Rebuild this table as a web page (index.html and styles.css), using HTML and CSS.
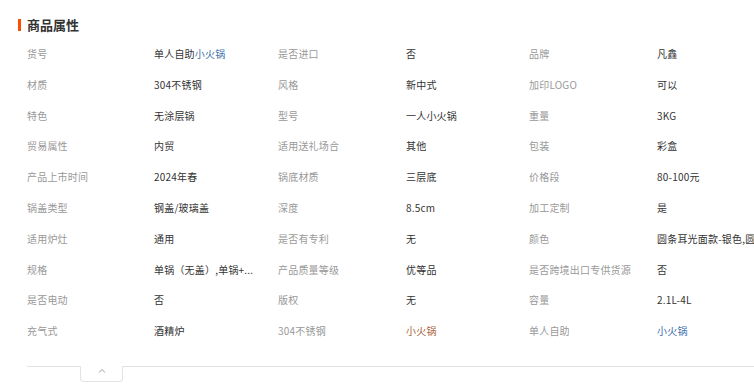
FILE: index.html
```html
<!DOCTYPE html>
<html lang="zh">
<head>
<meta charset="utf-8">
<link rel="stylesheet" href="styles.css">
</head>
<body>
<div class="panel">
  <div class="title"><span class="bar"></span><span class="title-text">商品属性</span></div>
  <div class="grid">
    <div class="k">货号</div><div class="v"><span>单人自助</span><span class="blue">小火锅</span></div>
    <div class="k">是否进口</div><div class="v">否</div>
    <div class="k">品牌</div><div class="v">凡鑫</div>

    <div class="k">材质</div><div class="v">304不锈钢</div>
    <div class="k">风格</div><div class="v">新中式</div>
    <div class="k">加印LOGO</div><div class="v">可以</div>

    <div class="k">特色</div><div class="v">无涂层锅</div>
    <div class="k">型号</div><div class="v">一人小火锅</div>
    <div class="k">重量</div><div class="v">3KG</div>

    <div class="k">贸易属性</div><div class="v">内贸</div>
    <div class="k">适用送礼场合</div><div class="v">其他</div>
    <div class="k">包装</div><div class="v">彩盒</div>

    <div class="k">产品上市时间</div><div class="v">2024年春</div>
    <div class="k">锅底材质</div><div class="v">三层底</div>
    <div class="k">价格段</div><div class="v">80-100元</div>

    <div class="k">锅盖类型</div><div class="v">钢盖/玻璃盖</div>
    <div class="k">深度</div><div class="v">8.5cm</div>
    <div class="k">加工定制</div><div class="v">是</div>

    <div class="k">适用炉灶</div><div class="v">通用</div>
    <div class="k">是否有专利</div><div class="v">无</div>
    <div class="k">颜色</div><div class="v">圆条耳光面款-银色,圆条耳光面款-金色</div>

    <div class="k">规格</div><div class="v clip">单锅（无盖）,单锅+...</div>
    <div class="k">产品质量等级</div><div class="v">优等品</div>
    <div class="k">是否跨境出口专供货源</div><div class="v">否</div>

    <div class="k">是否电动</div><div class="v">否</div>
    <div class="k">版权</div><div class="v">无</div>
    <div class="k">容量</div><div class="v">2.1L-4L</div>

    <div class="k">充气式</div><div class="v">酒精炉</div>
    <div class="k">304不锈钢</div><div class="v orange">小火锅</div>
    <div class="k">单人自助</div><div class="v blue">小火锅</div>
  </div>
  <div class="foot">
    <div class="line-left"></div>
    <div class="tab">
      <svg width="8" height="5" viewBox="0 0 8 5"><polyline points="1,4.5 4,1.5 7,4.5" fill="none" stroke="#999" stroke-width="1"/></svg>
    </div>
    <div class="line-right"></div>
  </div>
</div>
</body>
</html>
```

FILE: styles.css
```css
html, body {
  margin: 0;
  padding: 0;
  background: #fff;
  overflow: hidden;
}
body {
  font-family: "Noto Sans CJK SC", "Noto Sans", sans-serif;
  width: 754px;
  height: 390px;
}
.panel {
  padding-top: 17px;
  width: 900px;
}
.title {
  display: flex;
  align-items: center;
  padding-left: 18px;
  height: 16px;
}
.bar {
  width: 3px;
  height: 12px;
  background: #ff4d00;
  margin-right: 6px;
}
.title-text {
  font-size: 13px;
  font-weight: bold;
  color: #333;
  line-height: 16px;
}
.grid {
  display: grid;
  grid-template-columns: 127px 124px 128px 123px 128px 300px;
  grid-auto-rows: 30.8px;
  padding-left: 27px;
  margin-top: 6px;
  font-size: 10px;
  letter-spacing: 0.2px;
  line-height: 30.8px;
  align-items: center;
}
.k {
  color: #999;
  white-space: nowrap;
}
.v {
  color: #333;
  white-space: nowrap;
}
.v.clip {
  max-width: 110px;
  overflow: hidden;
}
.blue {
  color: #3d6fae;
}
.orange {
  color: #a8643a;
}
.foot {
  display: flex;
  margin-top: 19px;
  padding-left: 27px;
  align-items: flex-start;
}
.line-left {
  width: 53px;
  border-top: 1px solid #e3e3e3;
}
.tab {
  width: 41px;
  height: 13px;
  border: 1px solid #e3e3e3;
  border-top: none;
  border-radius: 0 0 4px 4px;
  display: flex;
  justify-content: center;
  padding-top: 2px;
  box-sizing: content-box;
}
.tab svg {
  display: block;
}
.line-right {
  flex: 1;
  border-top: 1px solid #e3e3e3;
}
```
